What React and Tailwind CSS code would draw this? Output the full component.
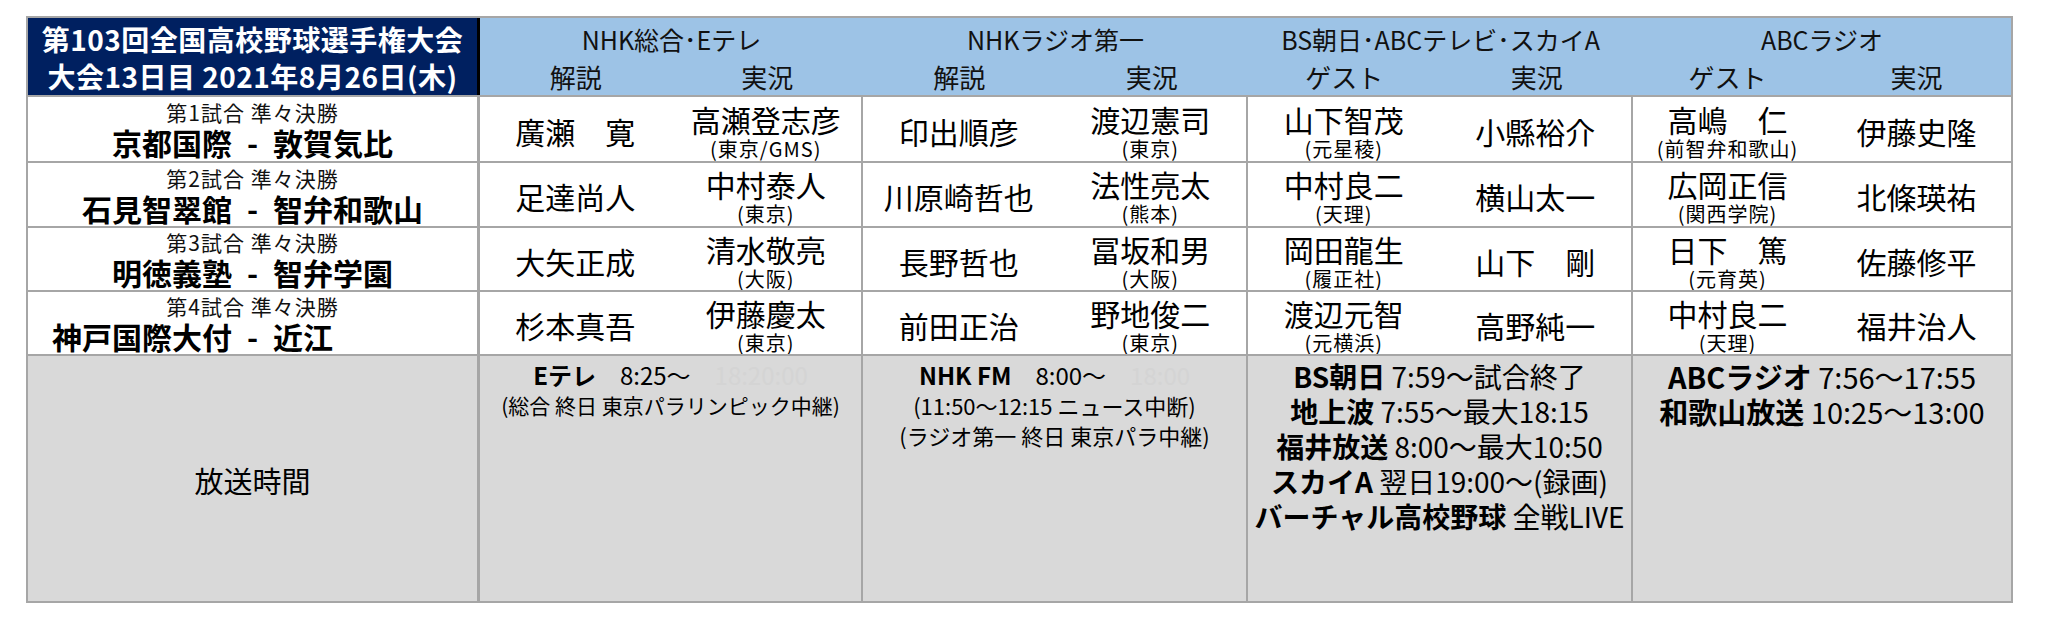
import React from 'react';

const font = { fontFamily: '"Noto Sans CJK JP", "Noto Sans", sans-serif' };

const groups = [
  { name: 'NHK総合･Eテレ', labels: ['解説', '実況'], width: 'w-[383px]' },
  { name: 'NHKラジオ第一', labels: ['解説', '実況'], width: 'w-[385px]' },
  { name: 'BS朝日･ABCテレビ･スカイA', labels: ['ゲスト', '実況'], width: 'w-[385px]' },
  { name: 'ABCラジオ', labels: ['ゲスト', '実況'], width: 'w-[378px]' },
];

const games = [
  {
    no: '第1試合 準々決勝',
    home: '京都国際',
    away: '敦賀気比',
    shift: '',
    height: 'h-[66px]',
    people: [
      ['廣瀬　寛'], ['高瀬登志彦', '東京/GMS'],
      ['印出順彦'], ['渡辺憲司', '東京'],
      ['山下智茂', '元星稜'], ['小縣裕介'],
      ['高嶋　仁', '前智弁和歌山'], ['伊藤史隆'],
    ],
  },
  {
    no: '第2試合 準々決勝',
    home: '石見智翠館',
    away: '智弁和歌山',
    shift: '',
    height: 'h-[65px]',
    people: [
      ['足達尚人'], ['中村泰人', '東京'],
      ['川原崎哲也'], ['法性亮太', '熊本'],
      ['中村良二', '天理'], ['横山太一'],
      ['広岡正信', '関西学院'], ['北條瑛祐'],
    ],
  },
  {
    no: '第3試合 準々決勝',
    home: '明徳義塾',
    away: '智弁学園',
    shift: '',
    height: 'h-[64px]',
    people: [
      ['大矢正成'], ['清水敬亮', '大阪'],
      ['長野哲也'], ['冨坂和男', '大阪'],
      ['岡田龍生', '履正社'], ['山下　剛'],
      ['日下　篤', '元育英'], ['佐藤修平'],
    ],
  },
  {
    no: '第4試合 準々決勝',
    home: '神戸国際大付',
    away: '近江',
    shift: 'pr-[120px]',
    height: 'h-[64px]',
    people: [
      ['杉本真吾'], ['伊藤慶太', '東京'],
      ['前田正治'], ['野地俊二', '東京'],
      ['渡辺元智', '元横浜'], ['高野純一'],
      ['中村良二', '天理'], ['福井治人'],
    ],
  },
];

const Person = ({ name, from }) => (
  <div className="flex-1 flex flex-col items-center justify-center pt-[3px] text-black">
    <div className="text-[30px] leading-[36px] whitespace-pre">{name}</div>
    {from && <div className="text-[20px] leading-[24px] tracking-[1px] whitespace-pre">({from})</div>}
  </div>
);

const Faint = ({ children }) => <span className="text-[#d4d4d4]">{children}</span>;

export default function App() {
  return (
    <div className="min-h-[622px] bg-white pt-[16px] pl-[26px]" style={font}>
      <div className="w-[1987px] border-2 border-[#a6a6a6] flex flex-col">
        {/* header */}
        <div className="flex h-[77px]">
          <div className="w-[452px] bg-[#002060] border-r-[3px] border-black flex flex-col items-center justify-center pt-[3px] text-white font-bold text-[28px] leading-[37px] tracking-[0.5px]">
            <div>第103回全国高校野球選手権大会</div>
            <div>大会13日目 2021年8月26日(木)</div>
          </div>
          <div className="flex-1 flex bg-[#9dc3e6] text-[#111]">
            {groups.map((g) => (
              <div key={g.name} className={`${g.width} flex flex-col pt-[3px]`}>
                <div className="h-[37px] flex items-center justify-center text-[25px]">{g.name}</div>
                <div className="h-[37px] flex text-[26px]">
                  {g.labels.map((l, i) => (
                    <div key={i} className="flex-1 flex items-center justify-center">{l}</div>
                  ))}
                </div>
              </div>
            ))}
          </div>
        </div>

        {/* games */}
        {games.map((row) => (
          <div key={row.no} className={`flex ${row.height} border-t-2 border-[#a6a6a6]`}>
            <div className="w-[452px] border-r-[3px] border-[#a6a6a6] flex flex-col items-center justify-center pt-[2px]">
              <div className="text-[21px] leading-[25px] tracking-[1px] text-[#111]">{row.no}</div>
              <div className={`flex items-center text-[30px] leading-[35px] font-bold text-black ${row.shift}`}>
                <span>{row.home}</span>
                <span className="mx-[15px]">-</span>
                <span>{row.away}</span>
              </div>
            </div>
            {groups.map((g, gi) => (
              <div
                key={g.name}
                className={`${g.width} flex ${gi < 3 ? 'border-r-2 border-[#a6a6a6]' : ''}`}
              >
                <Person name={row.people[gi * 2][0]} from={row.people[gi * 2][1]} />
                <Person name={row.people[gi * 2 + 1][0]} from={row.people[gi * 2 + 1][1]} />
              </div>
            ))}
          </div>
        ))}

        {/* broadcast times */}
        <div className="flex h-[247px] border-t-2 border-[#a6a6a6] bg-[#d9d9d9] text-black">
          <div className="w-[452px] border-r-[3px] border-[#a6a6a6] flex items-center justify-center pt-[4px] text-[29px]">
            放送時間
          </div>
          <div className="w-[383px] border-r-2 border-[#a6a6a6] flex flex-col items-center pt-[4px] text-center">
            <div className="text-[24px] leading-[30px] whitespace-pre">
              <b>Eテレ</b>　8:25～<Faint>　18:20:00</Faint>
            </div>
            <div className="text-[21px] leading-[30px] whitespace-pre">(総合 終日 東京パラリンピック中継)</div>
          </div>
          <div className="w-[385px] border-r-2 border-[#a6a6a6] flex flex-col items-center pt-[4px] text-center">
            <div className="text-[24px] leading-[30px] whitespace-pre">
              <b>NHK FM</b>　8:00～<Faint>　18:00</Faint>
            </div>
            <div className="text-[22px] leading-[30px] whitespace-pre">(11:50～12:15 ニュース中断)</div>
            <div className="text-[22px] leading-[30px] whitespace-pre">(ラジオ第一 終日 東京パラ中継)</div>
          </div>
          <div className="w-[385px] border-r-2 border-[#a6a6a6] flex flex-col items-center pt-[3px] text-center text-[28px] leading-[35px] whitespace-pre">
            <div><b>BS朝日</b> 7:59～試合終了</div>
            <div><b>地上波</b> 7:55～最大18:15</div>
            <div><b>福井放送</b> 8:00～最大10:50</div>
            <div><b>スカイA</b> 翌日19:00～(録画)</div>
            <div><b>バーチャル高校野球</b> 全戦LIVE</div>
          </div>
          <div className="w-[378px] flex flex-col items-center pt-[3px] text-center text-[29px] leading-[35px] whitespace-pre">
            <div><b>ABCラジオ</b> 7:56～17:55</div>
            <div><b>和歌山放送</b> 10:25～13:00</div>
          </div>
        </div>
      </div>
    </div>
  );
}
